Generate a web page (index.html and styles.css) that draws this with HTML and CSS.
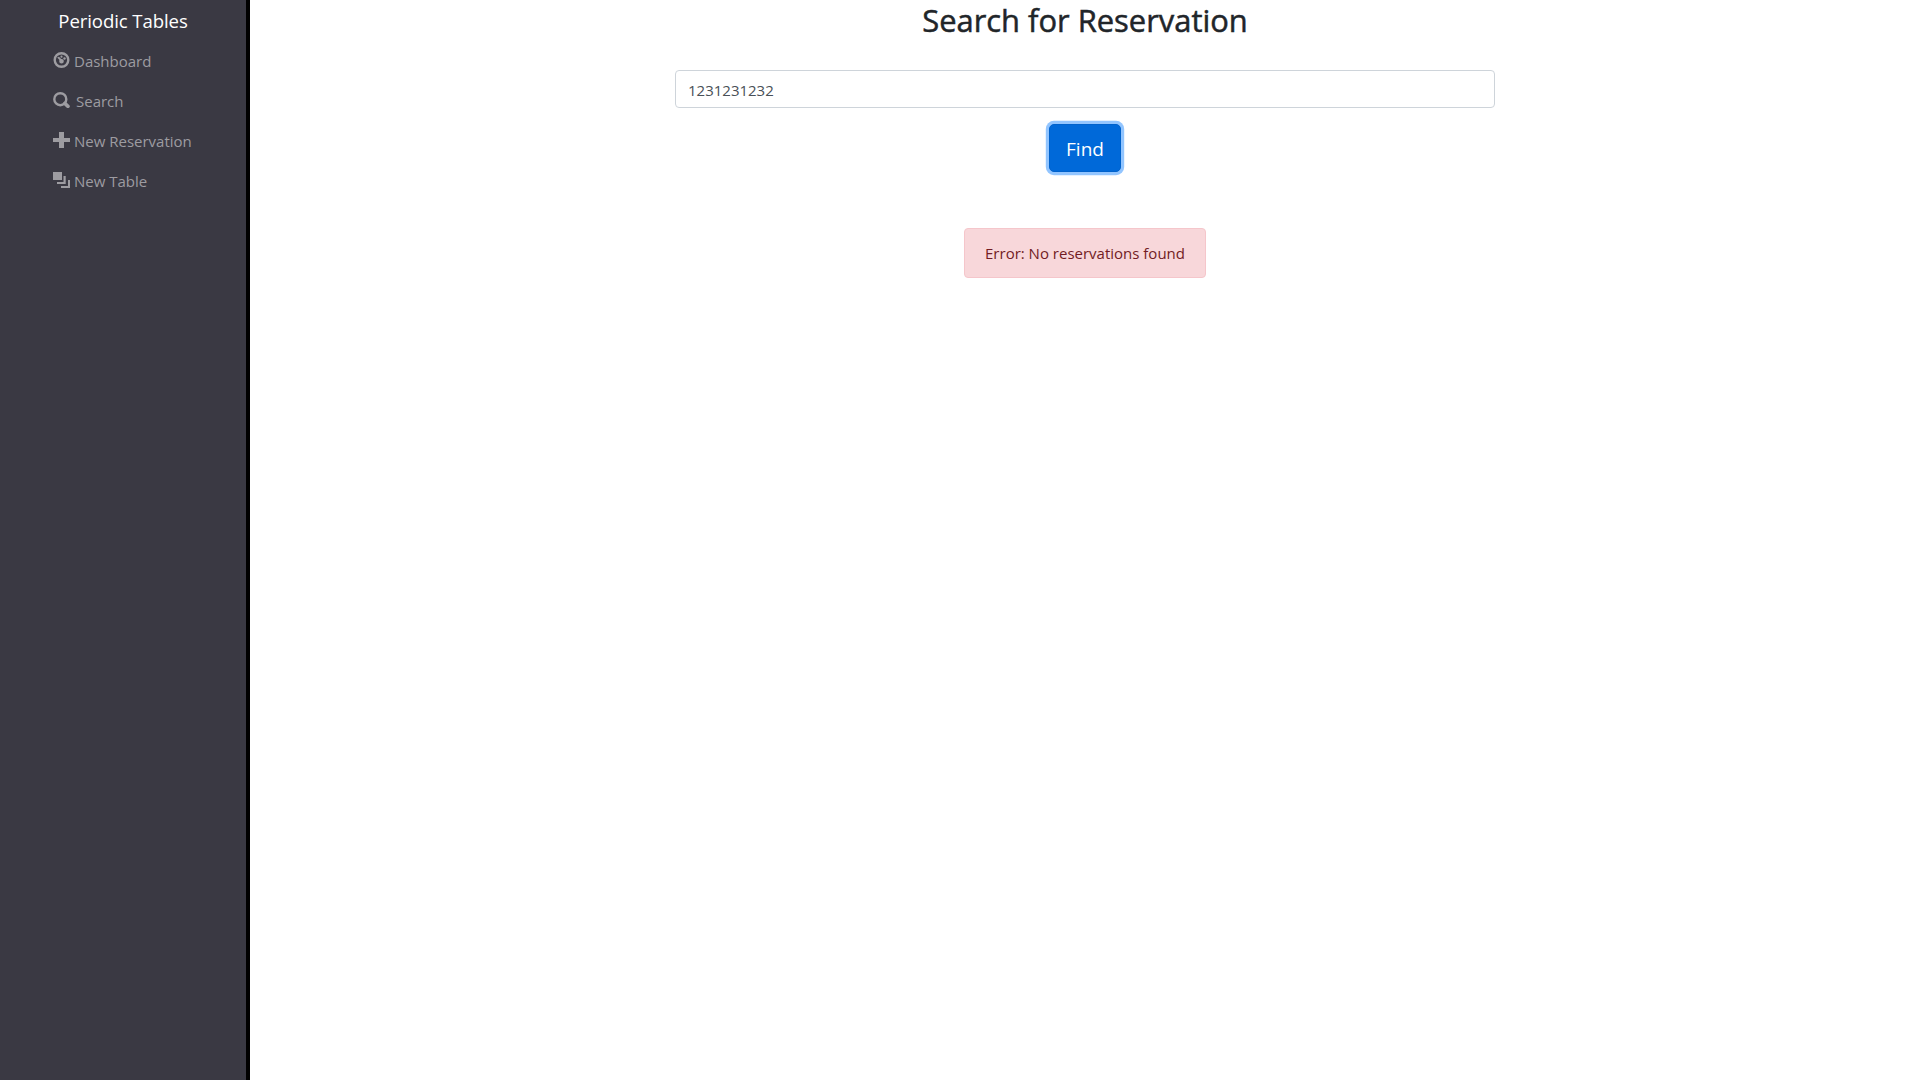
FILE: index.html
```html
<!DOCTYPE html>
<html lang="en">
<head>
<meta charset="utf-8">
<title>Periodic Tables</title>
<link rel="stylesheet" href="styles.css">
</head>
<body>
<div class="app">
  <nav class="sidebar">
    <a class="brand">Periodic Tables</a>
    <ul class="menu">
      <li class="item"><svg class="icon" viewBox="0 0 17 16"><circle class="ring" cx="8.5" cy="8" r="6.8"/><path d="M4.2 5.6l1.8-.8 2.2 2.3c1.6-.3 2.6.8 2.6 2.1a2.3 2.3 0 0 1-4.6 0c0-.5.1-.8.3-1.100z"/><circle cx="8.500" cy="4.700" r="1.100"/><circle cx="11.500" cy="6.500" r="1.200"/></svg><span class="label">Dashboard</span></li>
      <li class="item"><svg class="icon" viewBox="0 0 17 16"><circle class="ring" cx="7.3" cy="7.2" r="6"/><path class="handle" d="M11.800 11.400L15 14.300"/></svg><span class="label label-search">Search</span></li>
      <li class="item"><svg class="icon" viewBox="0 0 17 16"><path d="M6 0h5v6h6v4h-6v6h-5v-6h-6v-4h6z"/></svg><span class="label">New Reservation</span></li>
      <li class="item"><svg class="icon" viewBox="0 0 17 16"><path d="M0 0h9v8h-9zM10.500 4h2.200v8h-8.700v-2h6.500zM15 8h2v8h-9v-2h7z"/></svg><span class="label">New Table</span></li>
    </ul>
  </nav>
  <main class="content">
    <h2 class="title">Search for Reservation</h2>
    <input class="field" type="text" value="1231231232" aria-label="Mobile number">
    <button class="find" type="button">Find</button>
    <div class="alert">Error: No reservations found</div>
  </main>
</div>
</body>
</html>
```
FILE: styles.css
```css
* { box-sizing: border-box; }
body {
  margin: 0;
  font-family: "Open Sans", "Noto Sans", sans-serif;
  font-size: 15px;
  line-height: 24px;
  color: #212529;
  background: #fff;
}
.app { display: flex; height: 100vh; }
.sidebar {
  width: 250px;
  flex: none;
  background: #3a3943;
  border-right: 4px solid #000;
}
.brand {
  display: block;
  padding-top: 6px;
  height: 40px;
  line-height: 30px;
  text-align: center;
  font-size: 18.6px;
  letter-spacing: -0.1px;
  color: #fff;
}
.menu { list-style: none; margin: 0; padding: 0 0 0 53px; }
.item {
  display: flex;
  align-items: center;
  height: 40px;
  color: #9d9ca1;
}
.icon { width: 17px; height: 16px; fill: currentColor; }
.ring { fill: none; stroke: currentColor; stroke-width: 2.4; }
.handle { stroke: currentColor; stroke-width: 3.6; stroke-linecap: round; }
.label { padding: 2px 0 0 4px; white-space: nowrap; }
.label-search { padding-left: 6px; }
.content {
  flex: 1;
  display: flex;
  flex-direction: column;
  align-items: center;
}
.title {
  margin: 0;
  padding-top: 1px;
  font-size: 30.9px;
  line-height: 38px;
  font-weight: 500;
  -webkit-text-stroke: 0.5px currentColor;
}
.field {
  width: 820px;
  height: 38px;
  margin-top: 31px;
  padding: 2px 12px 0;
  border: 1px solid #ced4da;
  border-radius: 4px;
  font: inherit;
  color: #495057;
}
.find {
  width: 72px;
  height: 48px;
  margin-top: 16px;
  padding: 1px 0 0;
  border: 1px solid #0062cc;
  border-radius: 5px;
  background: #0069d9;
  box-shadow: 0 0 0 3.2px #92c5ff;
  font: inherit;
  font-size: 19px;
  color: #fff;
}
.alert {
  width: 242px;
  height: 50px;
  margin-top: 56px;
  padding-top: 12px;
  border: 1px solid #f5c6cb;
  border-radius: 4px;
  background: #f8d7da;
  color: #721c24;
  text-align: center;
  white-space: nowrap;
}
```
